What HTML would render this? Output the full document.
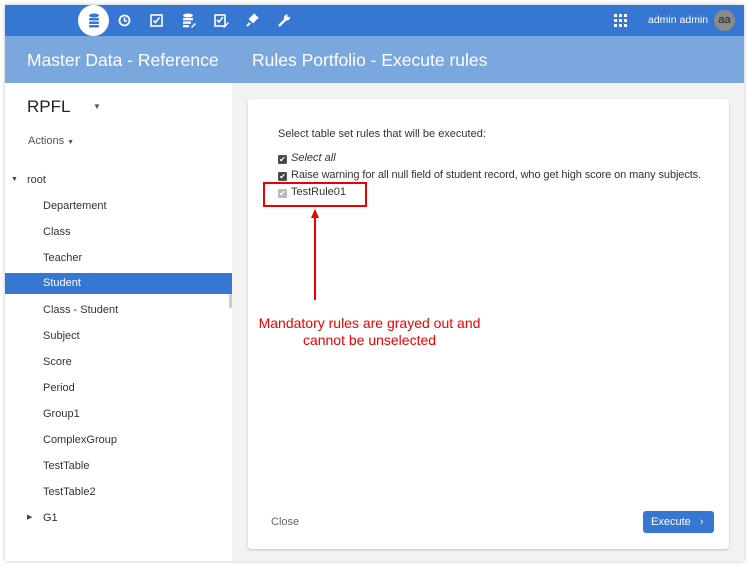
<!DOCTYPE html>
<html><head><style>
*{box-sizing:border-box;margin:0;padding:0}
body{width:752px;height:570px;background:#fff;font-family:"Liberation Sans",sans-serif;position:relative;overflow:hidden}
.frame{position:absolute;left:5px;top:5px;width:739px;height:556px;background:#f2f2f2;box-shadow:0 0 4px rgba(0,0,0,.25)}
.top{position:absolute;left:5px;top:5px;width:739px;height:31px;background:#3577d3}
.sub{position:absolute;left:5px;top:36px;width:739px;height:47px;background:#7ba7df;color:#fff;font-size:17.5px}
.sub span{position:absolute;top:14px}
.side{position:absolute;left:5px;top:83px;width:227px;height:478px;background:#fff}
.abs{position:absolute}
.item{position:absolute;left:38px;font-size:11px;color:#333}
.card{position:absolute;left:248px;top:99px;width:481px;height:450px;background:#fff;border-radius:3px;box-shadow:0 1px 2px rgba(0,0,0,.2)}
.cb{display:inline-block;width:9px;height:9px;border:1px solid #555;background:#444;color:#fff;font-size:8px;line-height:8px;text-align:center;vertical-align:-1px;margin-right:4px;border-radius:1px}
</style></head><body>
<div class="frame"></div>
<div class="top">
 <div class="abs" style="left:73px;top:0;width:31px;height:31px;border-radius:50%;background:#fff"></div>
 <svg class="abs" style="left:83px;top:8px" width="12" height="15" viewBox="0 0 12 15"><g fill="#3577d3"><ellipse cx="6" cy="2.5" rx="5" ry="2"/><rect x="1" y="5" width="10" height="2.5" rx="1"/><rect x="1" y="8.5" width="10" height="2.5" rx="1"/><rect x="1" y="12" width="10" height="2.5" rx="1"/></g></svg>
 <svg class="abs" style="left:113px;top:9px" width="13" height="13"><circle cx="6.5" cy="6.5" r="5" fill="none" stroke="#fff" stroke-width="1.8"/><path d="M6.5 3.5v3.5h2.5" stroke="#fff" stroke-width="1.5" fill="none"/></svg>
 <svg class="abs" style="left:145px;top:9px" width="13" height="13"><rect x="1" y="1" width="11" height="11" fill="none" stroke="#fff" stroke-width="1.6"/><path d="M3.5 6.5l2 2 4-5" stroke="#fff" stroke-width="1.6" fill="none"/></svg>
 <svg class="abs" style="left:177px;top:8px" width="14" height="15"><g fill="#fff"><ellipse cx="6" cy="2.5" rx="5" ry="2"/><rect x="1" y="5" width="10" height="2.3"/><rect x="1" y="8.5" width="8" height="2.3"/><rect x="1" y="12" width="6" height="2.3"/><path d="M9 14l4-4 1 1-4 4z"/></g></svg>
 <svg class="abs" style="left:209px;top:9px" width="15" height="14"><rect x="1" y="1" width="10" height="11" fill="none" stroke="#fff" stroke-width="1.6"/><path d="M3 6l2 2 4-5" stroke="#fff" stroke-width="1.6" fill="none"/><path d="M9 13l5-5 1 1-5 5z" fill="#fff"/></svg>
 <svg class="abs" style="left:240px;top:8px" width="14" height="14"><path d="M2 13l3-3M5 6l3 3 4-4-3-3zM9 2l3 3M8 3l2-2M11 6l2-2" stroke="#fff" stroke-width="2" fill="#fff"/></svg>
 <svg class="abs" style="left:272px;top:8px" width="14" height="14"><path d="M2 13l7-7" stroke="#fff" stroke-width="2.4"/><circle cx="10" cy="4.5" r="3" fill="#fff"/><circle cx="11.5" cy="3" r="1.2" fill="#3577d3"/></svg>
 <svg class="abs" style="left:609px;top:9px" width="13" height="13"><g fill="#fff"><rect x="0" y="0" width="3" height="3"/><rect x="5" y="0" width="3" height="3"/><rect x="10" y="0" width="3" height="3"/><rect x="0" y="5" width="3" height="3"/><rect x="5" y="5" width="3" height="3"/><rect x="10" y="5" width="3" height="3"/><rect x="0" y="10" width="3" height="3"/><rect x="5" y="10" width="3" height="3"/><rect x="10" y="10" width="3" height="3"/></g></svg>
 <div class="abs" style="left:643px;top:9px;font-size:10.5px;color:#fff">admin admin</div>
 <div class="abs" style="left:709px;top:5px;width:21px;height:21px;border-radius:50%;background:#8a8a8a;color:#222;font-size:11px;text-align:center;line-height:20px">aa</div>
</div>
<div class="sub"><span style="left:22px">Master Data - Reference</span><span style="left:247px">Rules Portfolio - Execute rules</span></div>
<div class="side">
 <div class="abs" style="left:22px;top:14px;font-size:17px;color:#222">RPFL</div>
 <div class="abs" style="left:88px;top:19px;font-size:8px;color:#555">▼</div>
 <div class="abs" style="left:23px;top:52px;font-size:11px;color:#555">Actions <span style="font-size:7px">▼</span></div>
 <div class="abs" style="left:6px;top:93px;font-size:7px;color:#444">▼</div>
 <div class="abs" style="left:22px;top:91px;font-size:11px;color:#333">root</div>
 <div class="abs" style="left:0;top:190px;width:227px;height:21px;background:#3577d3"></div>
 <div class="abs" style="left:224px;top:211px;width:3px;height:14px;background:#ccc"></div>
 <div class="item" style="top:117px">Departement</div>
 <div class="item" style="top:143px">Class</div>
 <div class="item" style="top:169px">Teacher</div>
 <div class="item" style="top:194px;color:#fff">Student</div>
 <div class="item" style="top:221px">Class - Student</div>
 <div class="item" style="top:247px">Subject</div>
 <div class="item" style="top:273px">Score</div>
 <div class="item" style="top:299px">Period</div>
 <div class="item" style="top:325px">Group1</div>
 <div class="item" style="top:351px">ComplexGroup</div>
 <div class="item" style="top:377px">TestTable</div>
 <div class="item" style="top:403px">TestTable2</div>
 <div class="abs" style="left:22px;top:430px;font-size:7px;color:#444">▶</div>
 <div class="item" style="top:429px">G1</div>
</div>
<div class="card">
 <div class="abs" style="left:30px;top:29px;font-size:11px;color:#333">Select table set rules that will be executed:</div>
 <div class="abs" style="left:30px;top:53px;font-size:11px;color:#333"><span class="cb">✔</span><i>Select all</i></div>
 <div class="abs" style="left:30px;top:70px;font-size:11px;color:#333;white-space:nowrap;letter-spacing:-0.1px"><span class="cb">✔</span>Raise warning for all null field of student record, who get high score on many subjects.</div>
 <div class="abs" style="left:30px;top:87px;font-size:11px;color:#333"><span class="cb" style="background:#bbb;border-color:#bbb">✔</span>TestRule01</div>
 <div class="abs" style="left:15px;top:83px;width:104px;height:25px;border:2px solid #e00"></div>
 <div class="abs" style="left:63px;top:110px;width:0;height:0;border-left:4px solid transparent;border-right:4px solid transparent;border-bottom:9px solid #e00"></div>
 <div class="abs" style="left:66px;top:118px;width:2px;height:83px;background:#e00"></div>
 <div class="abs" style="left:0;top:216px;width:243px;text-align:center;font-size:14px;line-height:17px;color:#e00">Mandatory rules are grayed out and<br>cannot be unselected</div>
 <div class="abs" style="left:23px;top:417px;font-size:11px;color:#666">Close</div>
 <div class="abs" style="left:395px;top:412px;width:71px;height:22px;background:#3577d3;border-radius:3px;color:#fff;font-size:11px;line-height:22px;padding-left:8px">Execute <span style="margin-left:6px">›</span></div>
</div>
</body></html>
